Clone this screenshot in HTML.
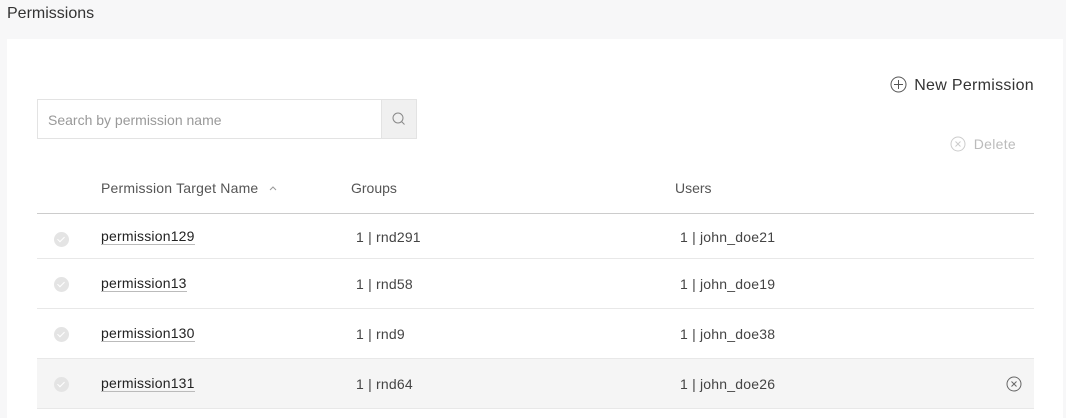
<!DOCTYPE html>
<html><head><style>
*{margin:0;padding:0;box-sizing:border-box}
html,body{width:1066px;height:418px;overflow:hidden}
body{background:#f7f7f8;font-family:"Liberation Sans",sans-serif;color:#333;position:relative}
.t{position:absolute;left:7px;top:5px;font-size:16px;color:#333}
.card{position:absolute;left:7px;top:39px;width:1056px;height:379px;background:#fff}
.a{position:absolute;white-space:nowrap}
.search{position:absolute;left:30px;top:60px;width:380px;height:40px;border:1px solid #e3e3e3}
.search span{position:absolute;left:10px;top:12px;font-size:14px;color:#999}
.sbtn{position:absolute;right:0;top:0;width:35px;height:38px;background:#f0f0f0;border-left:1px solid #e3e3e3}
.hd{font-size:14px;color:#555;top:141px}
.line{position:absolute;left:30px;width:997px;height:1px;background:#e8e8e8}
.row{position:absolute;left:30px;width:997px;height:50px}
.row .c{position:absolute;top:17px;font-size:14px;color:#444;letter-spacing:0.2px}
.row .n{left:64px;color:#222;border-bottom:1px solid #bbb;line-height:15px}
.chk{position:absolute;left:17px;top:18px;width:15px;height:15px;border-radius:50%;background:#e4e4e4}
.chk:after{content:"";position:absolute;left:5px;top:3px;width:3px;height:6px;border:solid #fff;border-width:0 1.5px 1.5px 0;transform:rotate(45deg)}
</style></head><body>
<div class="t">Permissions</div>
<div class="card">
 <div class="a" style="right:29px;top:37px;font-size:16px;color:#333;letter-spacing:0.3px"><svg width="17" height="17" viewBox="0 0 17 17" style="vertical-align:-3px;margin-right:7px"><circle cx="8.5" cy="8.5" r="7.5" fill="none" stroke="#555" stroke-width="1"/><path d="M8.5 4v9M4 8.5h9" stroke="#555"/></svg>New Permission</div>
 <div class="a" style="right:47px;top:97px;font-size:14px;color:#bbb;letter-spacing:0.3px"><svg width="16" height="16" viewBox="0 0 16 16" style="vertical-align:-3px;margin-right:8px"><circle cx="8" cy="8" r="7" fill="none" stroke="#ccc"/><path d="M5.5 5.5l5 5M10.5 5.5l-5 5" stroke="#ccc"/></svg>Delete</div>
 <div class="search"><span>Search by permission name</span><div class="sbtn"><svg width="35" height="38" viewBox="0 0 35 38"><circle cx="16" cy="18" r="5" fill="none" stroke="#888"/><path d="M19.5 21.5l3 3" stroke="#888"/></svg></div></div>
 <div class="a hd" style="left:94px;letter-spacing:0.2px">Permission Target Name <svg width="10" height="6" viewBox="0 0 10 6" style="margin-left:5px;vertical-align:2px"><path d="M2 5l3-3 3 3" fill="none" stroke="#999"/></svg></div>
 <div class="a hd" style="left:344px">Groups</div>
 <div class="a hd" style="left:668px">Users</div>
 <div class="line" style="top:174px;background:#ccc"></div>
 <div class="row" style="top:175px"><div class="chk"></div><div class="c n" style="top:15px">permission129</div><div class="c" style="left:319px;top:15px">1 | rnd291</div><div class="c" style="left:643px;top:15px">1 | john_doe21</div></div>
 <div class="line" style="top:219px"></div>
 <div class="row" style="top:220px"><div class="chk"></div><div class="c n">permission13</div><div class="c" style="left:319px">1 | rnd58</div><div class="c" style="left:643px">1 | john_doe19</div></div>
 <div class="line" style="top:269px"></div>
 <div class="row" style="top:270px"><div class="chk"></div><div class="c n">permission130</div><div class="c" style="left:319px">1 | rnd9</div><div class="c" style="left:643px">1 | john_doe38</div></div>
 <div class="line" style="top:319px"></div>
 <div class="row" style="top:320px;background:#f5f5f5"><div class="chk"></div><div class="c n">permission131</div><div class="c" style="left:319px">1 | rnd64</div><div class="c" style="left:643px">1 | john_doe26</div>
  <svg width="16" height="16" viewBox="0 0 16 16" style="position:absolute;left:969px;top:17px"><circle cx="8" cy="8" r="7" fill="none" stroke="#666"/><path d="M5.5 5.5l5 5M10.5 5.5l-5 5" stroke="#666"/></svg></div>
 <div class="line" style="top:369px"></div>
</div>
</body></html>
